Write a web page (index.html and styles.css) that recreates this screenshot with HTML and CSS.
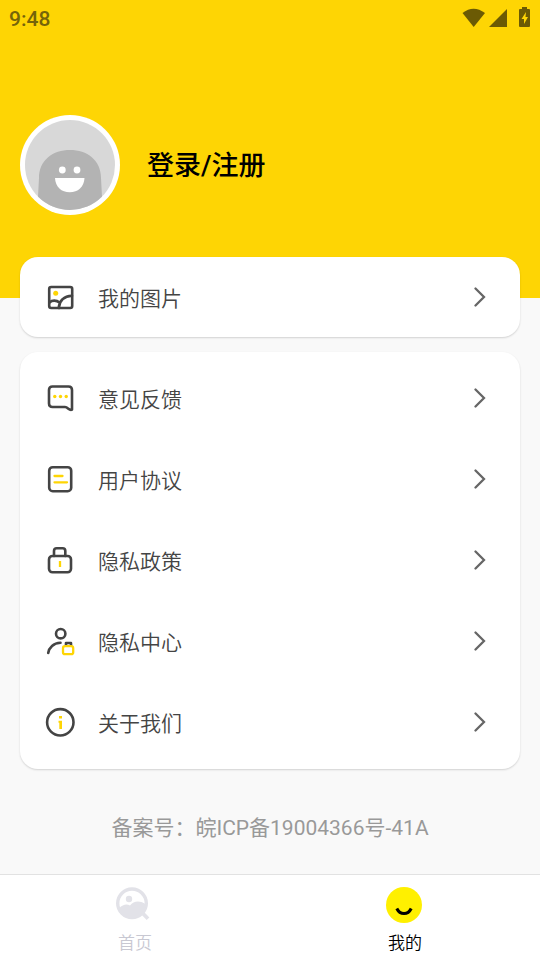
FILE: index.html
```html
<!DOCTYPE html>
<html lang="zh-CN">
<head>
<meta charset="utf-8">
<meta name="viewport" content="width=device-width, initial-scale=1">
<title>我的</title>
<link rel="stylesheet" href="styles.css">
</head>
<body>
<header class="hero">
  <div class="status">
    <span class="clock">9:48</span>
    <svg class="status-icons" width="68" height="22" viewBox="0 0 68 22" aria-hidden="true">
      <path d="M0.5 6Q11.500 -2.500 23 6L11.700 20Z"/>
      <path d="M45 2v18H27Z"/>
      <path fill-rule="evenodd" d="M60 0h5v2h2q1 0 1 1v16q0 1 -1 1h-9q-1 0 -1 -1V3q0 -1 1 -1h2ZM64 5l-4.500 7h2.500v5l4 -7h-2.500Z"/>
    </svg>
  </div>
  <a class="profile" href="#login">
    <svg class="avatar" width="100" height="100" viewBox="0 0 100 100" aria-hidden="true">
      <defs><clipPath id="face"><circle cx="50" cy="50" r="45"/></clipPath></defs>
      <circle cx="50" cy="50" r="50" fill="#fff"/>
      <circle cx="50" cy="50" r="45" fill="#d8d8d8"/>
      <path clip-path="url(#face)" fill="#b3b3b3" d="M17 100L19 63C19 45 33 35 50 35S81 45 81 63L83 100Z"/>
      <g fill="#fff"><circle cx="42.300" cy="55" r="3.400"/><circle cx="57" cy="55" r="3.400"/><path d="M35 63H64.500C64 72 58 77.300 49.700 77.300S35.500 72 35 63Z"/></g>
    </svg>
    <span class="login">登录/注册</span>
  </a>
</header>

<main class="content">
  <nav class="card" aria-label="图片">
    <a class="row" href="#pictures">
      <svg class="icon" viewBox="0 0 32 32" aria-hidden="true"><rect x="5.200" y="6" width="23" height="21" rx="2"/><path d="M5.500 21.500C8 19 12.500 19 15.500 21.500M14.700 27C15.500 19 20 15.200 28 14.800"/><circle class="dot" cx="11.700" cy="12.200" r="2.500"/></svg>
      <span class="label">我的图片</span>
      <svg class="chevron" viewBox="0 0 16 20" aria-hidden="true"><path d="M3.500 1.500L12 10L3.500 18.500"/></svg>
    </a>
  </nav>

  <nav class="card card-list" aria-label="服务">
    <a class="row" href="#feedback">
      <svg class="icon" viewBox="0 0 32 32" aria-hidden="true"><path d="M8.500 4.500H24.500Q28 4.500 28 8V27.600Q26.500 28.500 24 26.500Q22.500 25 21 25H8.500Q5 25 5 21.500V8Q5 4.500 8.500 4.500Z"/><g class="dot"><circle cx="10.800" cy="14.500" r="1.700"/><circle cx="16.500" cy="14.500" r="1.700"/><circle cx="22.200" cy="14.500" r="1.700"/></g></svg>
      <span class="label">意见反馈</span>
      <svg class="chevron" viewBox="0 0 16 20" aria-hidden="true"><path d="M3.500 1.500L12 10L3.500 18.500"/></svg>
    </a>
    <a class="row" href="#agreement">
      <svg class="icon" viewBox="0 0 32 32" aria-hidden="true"><rect x="5.200" y="4.200" width="22" height="24" rx="3.500"/><path class="accent" d="M10.500 13H18.500M10.500 19.300H23"/></svg>
      <span class="label">用户协议</span>
      <svg class="chevron" viewBox="0 0 16 20" aria-hidden="true"><path d="M3.500 1.500L12 10L3.500 18.500"/></svg>
    </a>
    <a class="row" href="#policy">
      <svg class="icon" viewBox="0 0 32 32" aria-hidden="true"><rect x="5" y="12" width="22" height="16.300" rx="3.500"/><path d="M10 12V7Q10 4.300 12.700 4.300H18.600Q21.300 4.300 21.300 7V12"/><path class="accent flat" d="M16 17V23"/></svg>
      <span class="label">隐私政策</span>
      <svg class="chevron" viewBox="0 0 16 20" aria-hidden="true"><path d="M3.500 1.500L12 10L3.500 18.500"/></svg>
    </a>
    <a class="row" href="#privacy">
      <svg class="icon" viewBox="0 0 32 32" aria-hidden="true"><circle cx="16.700" cy="8.700" r="4.700"/><path d="M4.200 28C5 22.500 9.500 18 16.500 17.800"/><path class="flat" d="M22 21V18H27V21"/><rect class="accent" x="19" y="21.200" width="10.200" height="8" rx="2"/></svg>
      <span class="label">隐私中心</span>
      <svg class="chevron" viewBox="0 0 16 20" aria-hidden="true"><path d="M3.500 1.500L12 10L3.500 18.500"/></svg>
    </a>
    <a class="row" href="#about">
      <svg class="icon" viewBox="0 0 32 32" aria-hidden="true"><circle cx="16.300" cy="16.300" r="13.200"/><path class="dot" d="M15 10h3v2.500h-3zM14.500 14.700H18V23H15.300V16.700H14.500z"/></svg>
      <span class="label">关于我们</span>
      <svg class="chevron" viewBox="0 0 16 20" aria-hidden="true"><path d="M3.500 1.500L12 10L3.500 18.500"/></svg>
    </a>
  </nav>
  <p class="filing">备案号：皖ICP备19004366号-41A</p>
</main>

<nav class="tabs" aria-label="主导航">
  <a class="tab" href="#home">
    <svg width="38" height="36" viewBox="0 0 38 36" aria-hidden="true">
      <circle cx="16" cy="16.300" r="14.300" fill="none" stroke="#e2e2e8" stroke-width="3.400"/>
      <circle cx="13" cy="12" r="3.200" fill="#e2e2e8"/>
      <path fill="#e2e2e8" d="M3 21.500C7 17 11 17 14 18.500C18 13 25 13.500 30 17.500C29 27 23 31 16 31C9 31 4.500 27 3 21.500Z"/>
      <path d="M26 25.500L32 31.800" stroke="#e2e2e8" stroke-width="3.800"/>
    </svg>
    <span>首页</span>
  </a>
  <a class="tab tab-active" href="#me" aria-current="page">
    <svg width="38" height="36" viewBox="0 0 38 36" aria-hidden="true">
      <circle cx="18" cy="18" r="18" fill="#fff000"/>
      <path d="M10.800 21.500C14 28.200 22 28.200 25.200 21.500" fill="none" stroke="#000" stroke-width="3"/>
    </svg>
    <span>我的</span>
  </a>
</nav>
</body>
</html>
```
FILE: styles.css
```css
* {
  box-sizing: border-box;
}

body {
  margin: 0;
  min-height: 100vh;
  display: flex;
  flex-direction: column;
  background: #f9f9f9;
  color: #444;
  font-family: Roboto, "Noto Sans CJK SC", sans-serif;
  font-weight: 350;
}

a {
  color: inherit;
  text-decoration: none;
}

svg {
  display: block;
  flex: none;
}

.hero {
  background: #fed504;
  padding-bottom: 83px;
}

.status {
  display: flex;
  align-items: center;
  justify-content: space-between;
  height: 36px;
  padding: 0 10px 0 9px;
  color: #75640a;
}

.clock {
  padding-top: 2px;
  font-size: 21px;
  font-weight: 500;
  line-height: 24px;
}

.status-icons {
  fill: #6b5a04;
}

.profile {
  display: flex;
  align-items: center;
  gap: 27px;
  margin-top: 79px;
  padding: 0 20px;
}

.login {
  padding-top: 2px;
  color: #000;
  font-size: 27px;
  font-weight: 500;
  line-height: 40px;
}

.content {
  flex: 1;
  margin-top: -41px;
  padding: 0 20px;
}

.card {
  background: #fff;
  border-radius: 18px;
  box-shadow: 0 1px 2px rgba(0, 0, 0, 0.16);
}

.card-list {
  display: grid;
  gap: 1px;
  margin-top: 15px;
  padding: 6px 0 7px;
}

.row {
  display: flex;
  align-items: center;
  height: 80px;
  padding: 0 32px 0 24px;
}

.icon {
  width: 32px;
  height: 32px;
  fill: none;
  stroke: #444;
  stroke-width: 2.6;
  stroke-linecap: round;
  stroke-linejoin: round;
}

.icon .dot {
  fill: #fed504;
  stroke: none;
}

.icon .accent {
  stroke: #fed504;
  stroke-width: 2.3;
}

.icon .flat {
  stroke-linecap: butt;
}

.label {
  flex: 1;
  margin-left: 22px;
  padding-top: 4px;
  font-size: 21px;
  line-height: 30px;
}

.chevron {
  width: 16px;
  height: 20px;
  fill: none;
  stroke: #666;
  stroke-width: 2.3;
  stroke-linecap: round;
}

.filing {
  margin: 44px 0 30px;
  color: #999;
  font-size: 21px;
  font-weight: 400;
  line-height: 30px;
  text-align: center;
}

.tabs {
  display: flex;
  background: #fff;
  border-top: 1px solid #e2e2e2;
}

.tab {
  flex: 1;
  display: flex;
  flex-direction: column;
  align-items: center;
  gap: 8px;
  padding: 12px 0 5px;
  color: #c8c8d2;
  font-size: 17px;
  line-height: 24px;
}

.tab-active {
  color: #000;
}
```
